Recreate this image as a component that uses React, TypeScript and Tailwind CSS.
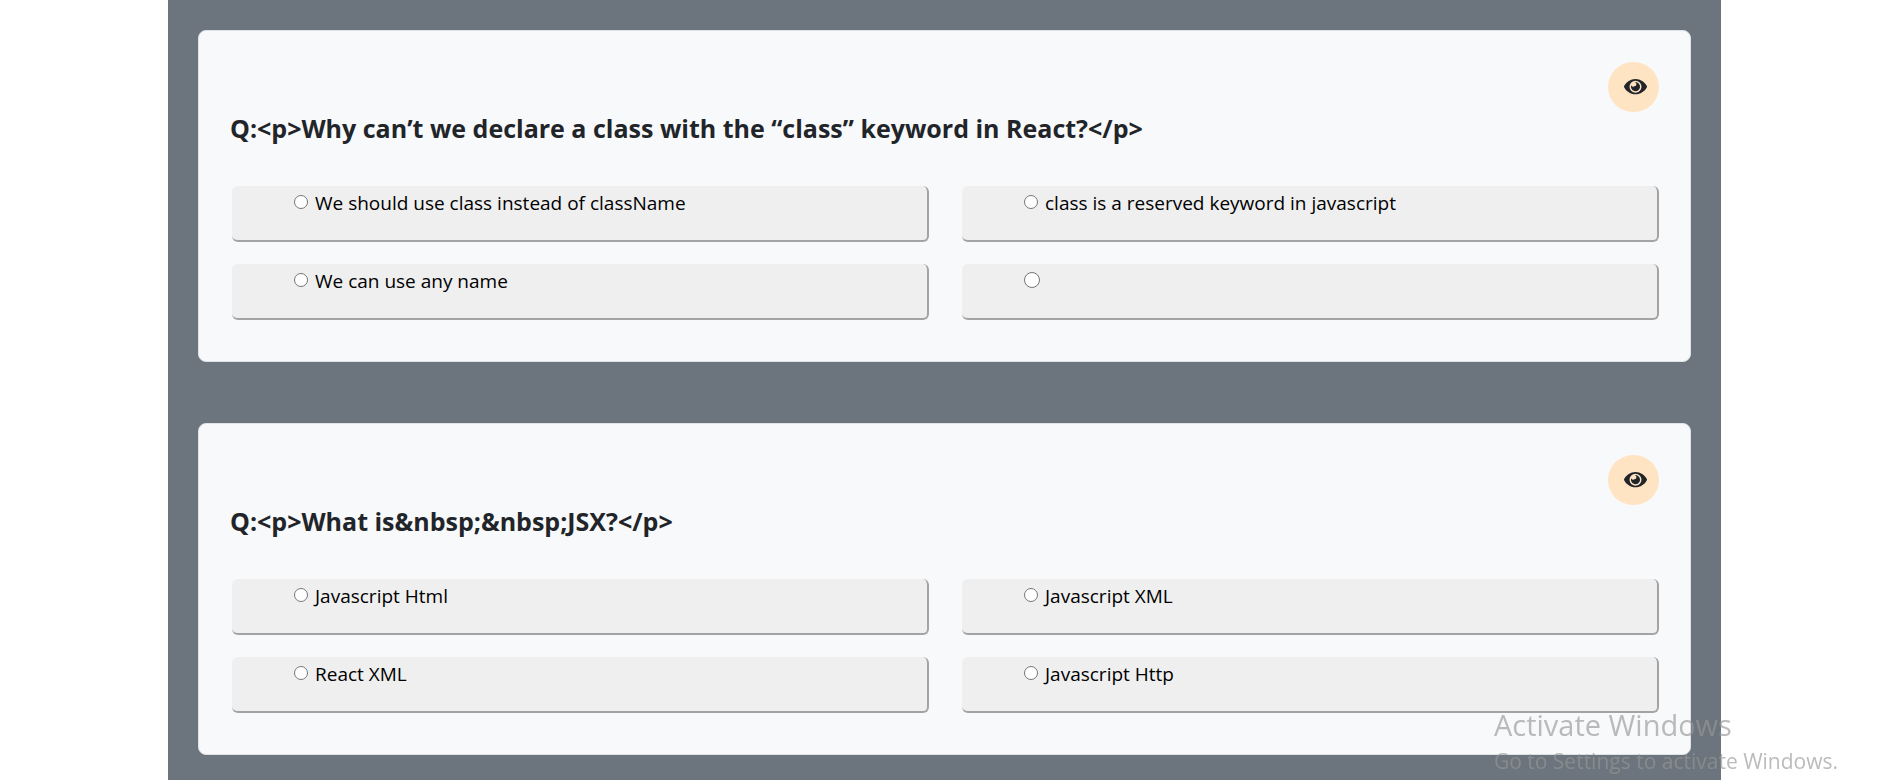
type Question = { id: string; text: string; options: string[] };

const questions: Question[] = [
  {
    id: 'class-keyword',
    text: '<p>Why can’t we declare a class with the “class” keyword in React?</p>',
    options: [
      'We should use class instead of className',
      'class is a reserved keyword in javascript',
      'We can use any name',
      '',
    ],
  },
  {
    id: 'jsx',
    text: '<p>What is&nbsp;&nbsp;JSX?</p>',
    options: ['Javascript Html', 'Javascript XML', 'React XML', 'Javascript Http'],
  },
];

function EyeIcon() {
  return (
    <svg viewBox="0 0 576 384" className="w-[23px]" fill="currentColor" aria-hidden="true">
      <path
        fillRule="evenodd"
        d="M572.500 177.400C518.300 71.600 410.900 0 288 0S57.700 71.600 3.500 177.400a32 32 0 0 0 0 29.200C57.700 312.400 165.100 384 288 384s230.300-71.600 284.500-177.400a32 32 0 0 0 0-29.200ZM288 342a150 150 0 1 1 0-300 150 150 0 0 1 0 300Z"
      />
      <path d="M288 78a114 114 0 1 1-106 72 48 48 0 0 0 76 34 48 48 0 0 0 4-103 114 114 0 0 1 26-3Z" />
    </svg>
  );
}

function Option({ group, label }: { group: string; label: string }) {
  return (
    <label className="flex h-14 items-start rounded-md border-r-2 border-b-2 border-[#a3a3a3] bg-[#efefef] pt-[3px] pl-[62px] text-black">
      <span className="flex h-7 items-center gap-[7px]">
        <input
          type="radio"
          name={group}
          aria-label={label || 'Empty option'}
          className={`${label ? 'size-[14px]' : 'size-4'} mb-0.5 appearance-none rounded-full border border-[#767676] bg-white checked:border-4 checked:border-[#0075ff]`}
        />
        <span className="text-[19px] leading-7">{label}</span>
      </span>
    </label>
  );
}

function QuestionCard({ question }: { question: Question }) {
  return (
    <section className="rounded-lg border border-[#dee2e6] bg-[#f8f9fb] px-[31px] pt-[31px] pb-[41px]">
      <div className="flex justify-end">
        <button
          type="button"
          aria-label="Show answer"
          className="flex h-[50px] w-[51px] items-center justify-center rounded-full bg-[#ffe4c4] pl-1 text-[#212529]"
        >
          <EyeIcon />
        </button>
      </div>
      <h2 className="mb-[42px] text-[25px] leading-8 font-bold">Q:{question.text}</h2>
      <div className="grid grid-cols-2 gap-x-[33px] gap-y-[22px] pl-[2px]">
        {question.options.map((label, i) => (
          <Option key={i} group={question.id} label={label} />
        ))}
      </div>
    </section>
  );
}

export default function App() {
  return (
    <div className="min-h-screen bg-white pr-[171px] pl-[168px] font-['Open_Sans','Noto_Sans',sans-serif] text-[#212529]">
      <main className="flex min-h-screen flex-col gap-[61px] bg-[#6c757d] px-[30px] pt-[30px] pb-6">
        {questions.map((q) => (
          <QuestionCard key={q.id} question={q} />
        ))}
      </main>
      <aside className="pointer-events-none fixed right-[54px] bottom-px text-[#969696]/65">
        <p className="text-[29px] leading-9">Activate Windows</p>
        <p className="text-[21px] leading-9">Go to Settings to activate Windows.</p>
      </aside>
    </div>
  );
}
